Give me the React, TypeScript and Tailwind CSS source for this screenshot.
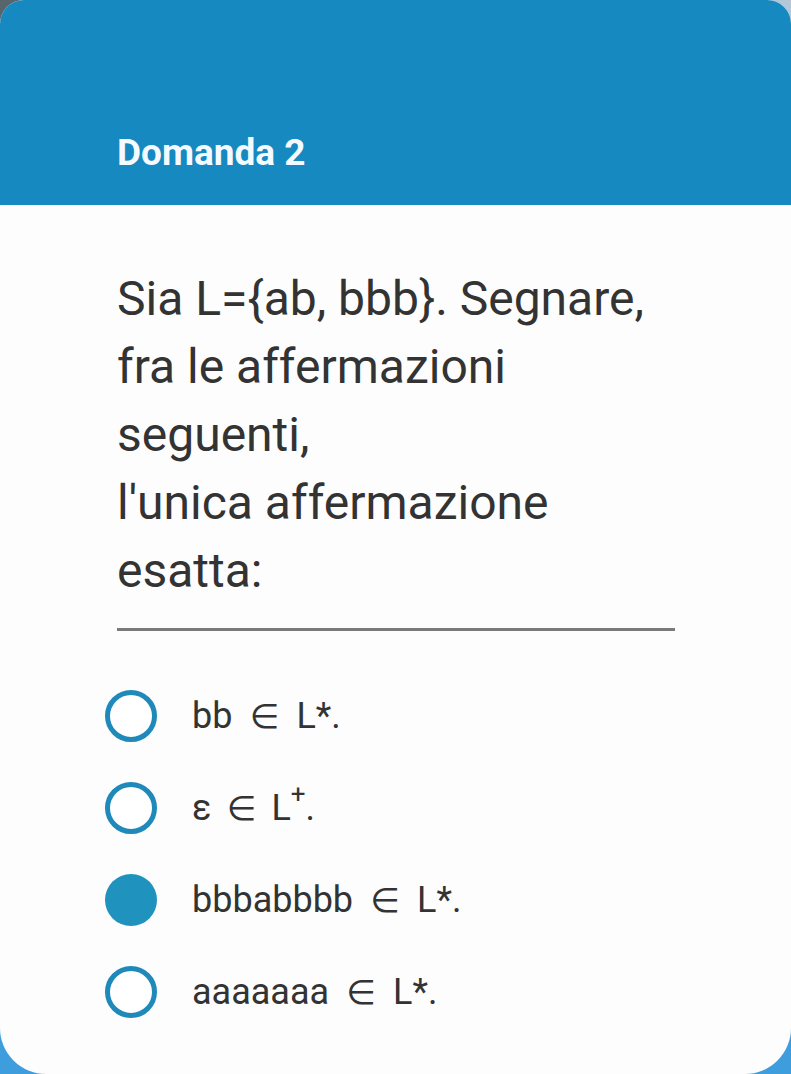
import React from "react";

const options = [
  { pre: "bb", post: "L*.", sup: false, checked: false },
  { pre: "ε", post: "L", sup: true, checked: false },
  { pre: "bbbabbbb", post: "L*.", sup: false, checked: true },
  { pre: "aaaaaaa", post: "L*.", sup: false, checked: false },
];

function Radio({ checked }: { checked: boolean }) {
  return checked ? (
    <div className="h-[52px] w-[52px] shrink-0 rounded-full bg-[#1f93bd]" />
  ) : (
    <div className="h-[52px] w-[52px] shrink-0 rounded-full border-[5px] border-[#1f8aba] bg-white" />
  );
}

export default function App() {
  return (
    <div className="relative h-[1074px] w-[791px] overflow-hidden bg-[linear-gradient(180deg,transparent_50px,#3e9edd_900px),linear-gradient(90deg,#58646c,#b3c8d8)]">
      <div
        className="flex h-[1074px] w-[791px] flex-col overflow-hidden rounded-t-[24px] rounded-b-[46px] bg-[#fdfdfd]"
        style={{ fontFamily: "Roboto, 'Noto Sans', sans-serif" }}
      >
        <div className="flex h-[205px] shrink-0 items-end bg-[#1589c0] pb-[30px] pl-[117px]">
          <div className="text-[37px] font-bold leading-[44px] text-[#f4faff]">Domanda 2</div>
        </div>
        <div className="pl-[117px]">
          <div className="mt-[60px] w-[558px] text-[48px] leading-[68px] text-[#333333]">
            {"Sia L={ab, bbb}. Segnare, fra le affermazioni seguenti,"}
            <br />
            {"l'unica affermazione esatta:"}
          </div>
          <div className="mt-[23px] h-[3px] w-[558px] bg-[#7a7a7a]" />
        </div>
        <div className="mt-[39px] flex flex-col pl-[105px]">
          {options.map((o, i) => (
            <div key={i} className="flex h-[92px] items-center">
              <Radio checked={o.checked} />
              <div className="ml-[35px] flex items-center text-[36px] leading-[44px] text-[#333333]">
                <span>{o.pre}</span>
                <span
                  className={
                    o.sup
                      ? "inline-block w-[60px] text-center text-[34px]"
                      : "inline-block w-[64px] text-center text-[34px]"
                  }
                  style={{ fontFamily: "'DejaVu Sans', sans-serif" }}
                >
                  ∈
                </span>
                <span>{o.post}</span>
                {o.sup && (
                  <>
                    <span className="relative -top-[14px] text-[26px] leading-none">+</span>
                    <span>.</span>
                  </>
                )}
              </div>
            </div>
          ))}
        </div>
      </div>
    </div>
  );
}
